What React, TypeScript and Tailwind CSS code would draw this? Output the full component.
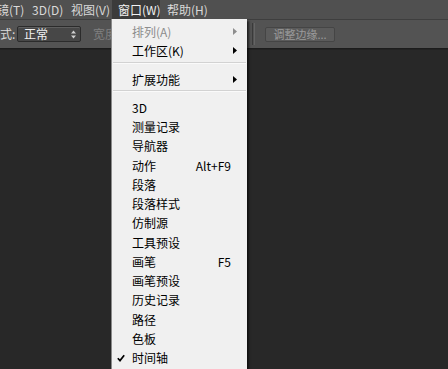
import React from "react";

const font = { fontFamily: '"Noto Sans CJK SC", "Noto Sans", sans-serif' };

type Item =
  | { kind: "item"; label: string; shortcut?: string; sub?: boolean; disabled?: boolean; checked?: boolean }
  | { kind: "sep" };

const items: Item[] = [
  { kind: "item", label: "排列(A)", sub: true, disabled: true },
  { kind: "item", label: "工作区(K)", sub: true },
  { kind: "sep" },
  { kind: "item", label: "扩展功能", sub: true },
  { kind: "sep" },
  { kind: "item", label: "3D" },
  { kind: "item", label: "测量记录" },
  { kind: "item", label: "导航器" },
  { kind: "item", label: "动作", shortcut: "Alt+F9" },
  { kind: "item", label: "段落" },
  { kind: "item", label: "段落样式" },
  { kind: "item", label: "仿制源" },
  { kind: "item", label: "工具预设" },
  { kind: "item", label: "画笔", shortcut: "F5" },
  { kind: "item", label: "画笔预设" },
  { kind: "item", label: "历史记录" },
  { kind: "item", label: "路径" },
  { kind: "item", label: "色板" },
  { kind: "item", label: "时间轴", checked: true },
];

function Arrow({ color }: { color: string }) {
  return (
    <svg width="4" height="7" viewBox="0 0 4 7" className="shrink-0">
      <polygon points="0,0 4,3.5 0,7" fill={color} />
    </svg>
  );
}

function MenuRow({ item }: { item: Extract<Item, { kind: "item" }> }) {
  return (
    <div
      className={`flex h-[19.25px] items-center text-[12px] leading-[19px] ${
        item.disabled ? "text-[#8d8d8d]" : "text-[#000000]"
      } ${item.sub ? "pr-[10px]" : "pr-[16px]"}`}
    >
      <div className="flex w-[20px] shrink-0 items-center pl-[5px]">
        {item.checked && (
          <svg width="8" height="8" viewBox="0 0 8 8">
            <path d="M0.8 4.2 L3 6.6 L7.2 1.2" fill="none" stroke="#000" strokeWidth="1.7" />
          </svg>
        )}
      </div>
      <span className="whitespace-nowrap">{item.label}</span>
      {item.shortcut && <span className="ml-auto whitespace-nowrap">{item.shortcut}</span>}
      {item.sub && (
        <span className="ml-auto">
          <Arrow color={item.disabled ? "#8d8d8d" : "#000"} />
        </span>
      )}
    </div>
  );
}

export default function App() {
  return (
    <div className="relative flex h-[369px] w-[448px] flex-col overflow-hidden bg-[#282828]" style={font}>
      {/* menu bar */}
      <div className="flex h-[19px] shrink-0 items-center bg-[#505050] text-[12px] leading-[19px] text-[#d9d9d9]">
        <span className="ml-[-3px] w-[35px] shrink-0 whitespace-nowrap">镜(T)</span>
        <span className="w-[39px] shrink-0 whitespace-nowrap">3D(D)</span>
        <span className="w-[41px] shrink-0 whitespace-nowrap">视图(V)</span>
        <span className="h-[19px] w-[48px] shrink-0 whitespace-nowrap bg-[#3b3b3b] pl-[6px] text-[#f2f2f2]">窗口(W)</span>
        <span className="ml-[7px] whitespace-nowrap">帮助(H)</span>
      </div>

      {/* options bar */}
      <div className="flex h-[30px] shrink-0 items-center border-t border-b border-t-[#3e3e3e] border-b-[#1c1c1c] bg-[#535353] text-[12px] text-[#dcdcdc]">
        <span className="w-[17px] shrink-0 whitespace-nowrap">式:</span>
        <div className="flex h-[16px] w-[64px] shrink-0 items-center justify-between rounded-[2px] border border-[#2b2b2b] bg-[#474747] pl-[6px] pr-[4px] shadow-[inset_0_1px_0_#5e5e5e]">
          <span className="leading-[14px] text-[#f0f0f0]">正常</span>
          <svg width="5" height="9" viewBox="0 0 5 9">
            <polygon points="0,3.5 2.5,0.5 5,3.5" fill="#d0d0d0" />
            <polygon points="0,5.5 2.5,8.5 5,5.5" fill="#d0d0d0" />
          </svg>
        </div>
        <span className="ml-[12px] w-[159px] shrink-0 whitespace-nowrap text-[#808080]">宽度:</span>
        <div className="flex h-[22px] shrink-0 gap-[1px]">
          <div className="w-[1px] bg-[#3a3a3a]" />
          <div className="w-[1px] bg-[#646464]" />
        </div>
        <div className="ml-[10px] flex h-[15px] w-[70px] shrink-0 items-center justify-center rounded-[2px] border border-[#454545] bg-[#5b5b5b] text-[11px] leading-[13px] text-[#9c9c9c]">
          调整边缘...
        </div>
      </div>

      <div className="flex-1 border-t border-[#222222] bg-[#282828]" />

      {/* window menu */}
      <div className="absolute bottom-0 left-[111px] top-[19px] w-[136px] border-l border-[#8a8a8a] bg-[#f0f0f0] pt-[3px] shadow-[2px_2px_2px_rgba(0,0,0,0.6)]">
        {items.map((item, i) =>
          item.kind === "sep" ? (
            <div key={i} className="h-[9px] pt-[1px]">
              <div className="mx-[1px] h-[1px] bg-[#d2d2d2]" />
              <div className="mx-[1px] h-[1px] bg-[#fafafa]" />
            </div>
          ) : (
            <MenuRow key={i} item={item} />
          )
        )}
      </div>
    </div>
  );
}
